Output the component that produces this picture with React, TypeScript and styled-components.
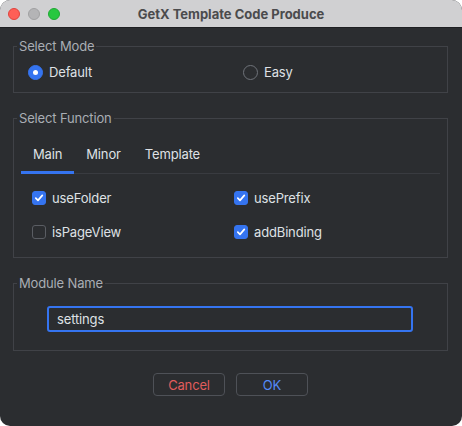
import styled, { createGlobalStyle } from 'styled-components'

const GlobalStyle = createGlobalStyle`
    html, body {
        margin: 0;
        padding: 0;
        background: #ffffff;
    }
    body {
        font-family: Inter, "Noto Sans", "Liberation Sans", sans-serif;
        -webkit-font-smoothing: antialiased;
    }
`

const modes = [
    { label: 'Default', checked: true },
    { label: 'Easy', checked: false },
]

const tabs = ['Main', 'Minor', 'Template']

const options = [
    { label: 'useFolder', checked: true },
    { label: 'usePrefix', checked: true },
    { label: 'isPageView', checked: false },
    { label: 'addBinding', checked: true },
]

const App = () => {
    return (
        <>
        <GlobalStyle />
        <Window>
            <TitleBar>
                <Lights>
                    <Light color="#fe5f57" edge="#e0443e" />
                    <Light color="#b4b4b6" edge="#a0a0a2" />
                    <Light color="#28c840" edge="#1fa933" />
                </Lights>
                <Title>GetX Template Code Produce</Title>
                <span />
            </TitleBar>
            <Content>
                <Group>
                    <Legend>Select Mode</Legend>
                    <RadioRow>
                        {modes.map((m) => (
                            <Choice key={m.label}>
                                <Radio checked={m.checked} />
                                {m.label}
                            </Choice>
                        ))}
                    </RadioRow>
                </Group>

                <Group>
                    <Legend>Select Function</Legend>
                    <TabBar>
                        {tabs.map((t, i) => (
                            <Tab key={t} active={i === 0}>{t}</Tab>
                        ))}
                    </TabBar>
                    <OptionGrid>
                        {options.map((o) => (
                            <CheckItem key={o.label}>
                                <Box checked={o.checked}>
                                    {o.checked &&
                                    <svg width="10" height="10" viewBox="0 0 10 10">
                                        <path d="M1.8 5.2 L4 7.4 L8.3 2.4" fill="none" stroke="#ffffff" strokeWidth="1.7" strokeLinecap="round" strokeLinejoin="round" />
                                    </svg>
                                    }
                                </Box>
                                {o.label}
                            </CheckItem>
                        ))}
                    </OptionGrid>
                </Group>

                <Group>
                    <Legend>Module Name</Legend>
                    <NameInput defaultValue="settings" />
                </Group>

                <ButtonRow>
                    <DialogButton tone="#e05c5c">Cancel</DialogButton>
                    <DialogButton tone="#548af7">OK</DialogButton>
                </ButtonRow>
            </Content>
        </Window>
        </>
    )
}

export default App

const Window = styled.div`
    width: 462px;
    height: 426px;
    border-radius: 10px;
    overflow: hidden;
    background: #2b2d30;
    display: flex;
    flex-direction: column;
    letter-spacing: -0.15px;
`

const TitleBar = styled.div`
    height: 28px;
    flex-shrink: 0;
    background: #d0d0d2;
    border-bottom: 1px solid #1e1f22;
    box-sizing: border-box;
    display: grid;
    grid-template-columns: 70px 1fr 70px;
    align-items: center;
`

const Lights = styled.div`
    display: flex;
    gap: 8px;
    padding-left: 8px;
`

const Light = styled.span<{ color: string; edge: string }>`
    width: 12px;
    height: 12px;
    border-radius: 50%;
    box-sizing: border-box;
    background: ${(p) => p.color};
    border: 0.5px solid ${(p) => p.edge};
`

const Title = styled.div`
    text-align: center;
    font-size: 13px;
    font-weight: 700;
    color: #4b4b4d;
    letter-spacing: 0;
`

const Content = styled.div`
    display: flex;
    flex-direction: column;
    gap: 17px;
    padding: 10px 14px 0 13px;
`

const Group = styled.fieldset`
    margin: 0;
    padding: 0;
    border: 1px solid #404247;
    min-inline-size: 0;
`

const Legend = styled.legend`
    margin-left: 3px;
    padding: 0 2px;
    font-size: 13px;
    line-height: 16px;
    color: #a9adb4;
`

const RadioRow = styled.div`
    display: grid;
    grid-template-columns: 215px 1fr;
    padding: 8px 0 10px 14px;
`

const Choice = styled.label`
    display: flex;
    align-items: center;
    gap: 6px;
    height: 20px;
    font-size: 13px;
    color: #dfe1e5;
`

const Radio = styled.span<{ checked: boolean }>`
    width: 15px;
    height: 15px;
    border-radius: 50%;
    box-sizing: border-box;
    display: flex;
    align-items: center;
    justify-content: center;
    background: ${(p) => (p.checked ? '#3574f0' : 'transparent')};
    border: 1px solid ${(p) => (p.checked ? '#3574f0' : '#6f737a')};
    &::after {
        content: '';
        width: 5px;
        height: 5px;
        border-radius: 50%;
        background: #ffffff;
        display: ${(p) => (p.checked ? 'block' : 'none')};
    }
`

const TabBar = styled.div`
    display: flex;
    margin: 10px 7px 0 7px;
    border-bottom: 1px solid #393b40;
`

const Tab = styled.div<{ active: boolean }>`
    height: 38px;
    padding: 1px 12px 0 12px;
    display: flex;
    align-items: center;
    box-sizing: border-box;
    font-size: 13px;
    color: #dfe1e5;
    border-bottom: 3px solid ${(p) => (p.active ? '#3574f0' : 'transparent')};
    margin-bottom: -1px;
`

const OptionGrid = styled.div`
    display: grid;
    grid-template-columns: 202px 1fr;
    row-gap: 14px;
    padding: 14px 0 15px 18px;
`

const CheckItem = styled.label`
    display: flex;
    align-items: center;
    gap: 6px;
    height: 20px;
    font-size: 13px;
    color: #dfe1e5;
`

const Box = styled.span<{ checked: boolean }>`
    width: 14px;
    height: 14px;
    border-radius: 3px;
    box-sizing: border-box;
    display: flex;
    align-items: center;
    justify-content: center;
    background: ${(p) => (p.checked ? '#3574f0' : 'transparent')};
    border: 1px solid ${(p) => (p.checked ? '#3574f0' : '#5a5d63')};
`

const NameInput = styled.input`
    display: block;
    width: 366px;
    height: 26px;
    box-sizing: border-box;
    margin: 15px 0 18px 33px;
    padding: 0 8px;
    border: 2px solid #3574f0;
    border-radius: 3px;
    background: #2b2d30;
    color: #dfe1e5;
    font-family: inherit;
    font-size: 13px;
    letter-spacing: inherit;
    outline: none;
`

const ButtonRow = styled.div`
    display: flex;
    justify-content: center;
    gap: 11px;
    padding-top: 5px;
`

const DialogButton = styled.button<{ tone: string }>`
    width: 72px;
    height: 23px;
    box-sizing: border-box;
    border: 1px solid #4e5157;
    border-radius: 4px;
    background: #2b2d30;
    color: ${(p) => p.tone};
    font-family: inherit;
    font-size: 13px;
    letter-spacing: inherit;
    padding: 0;
`
